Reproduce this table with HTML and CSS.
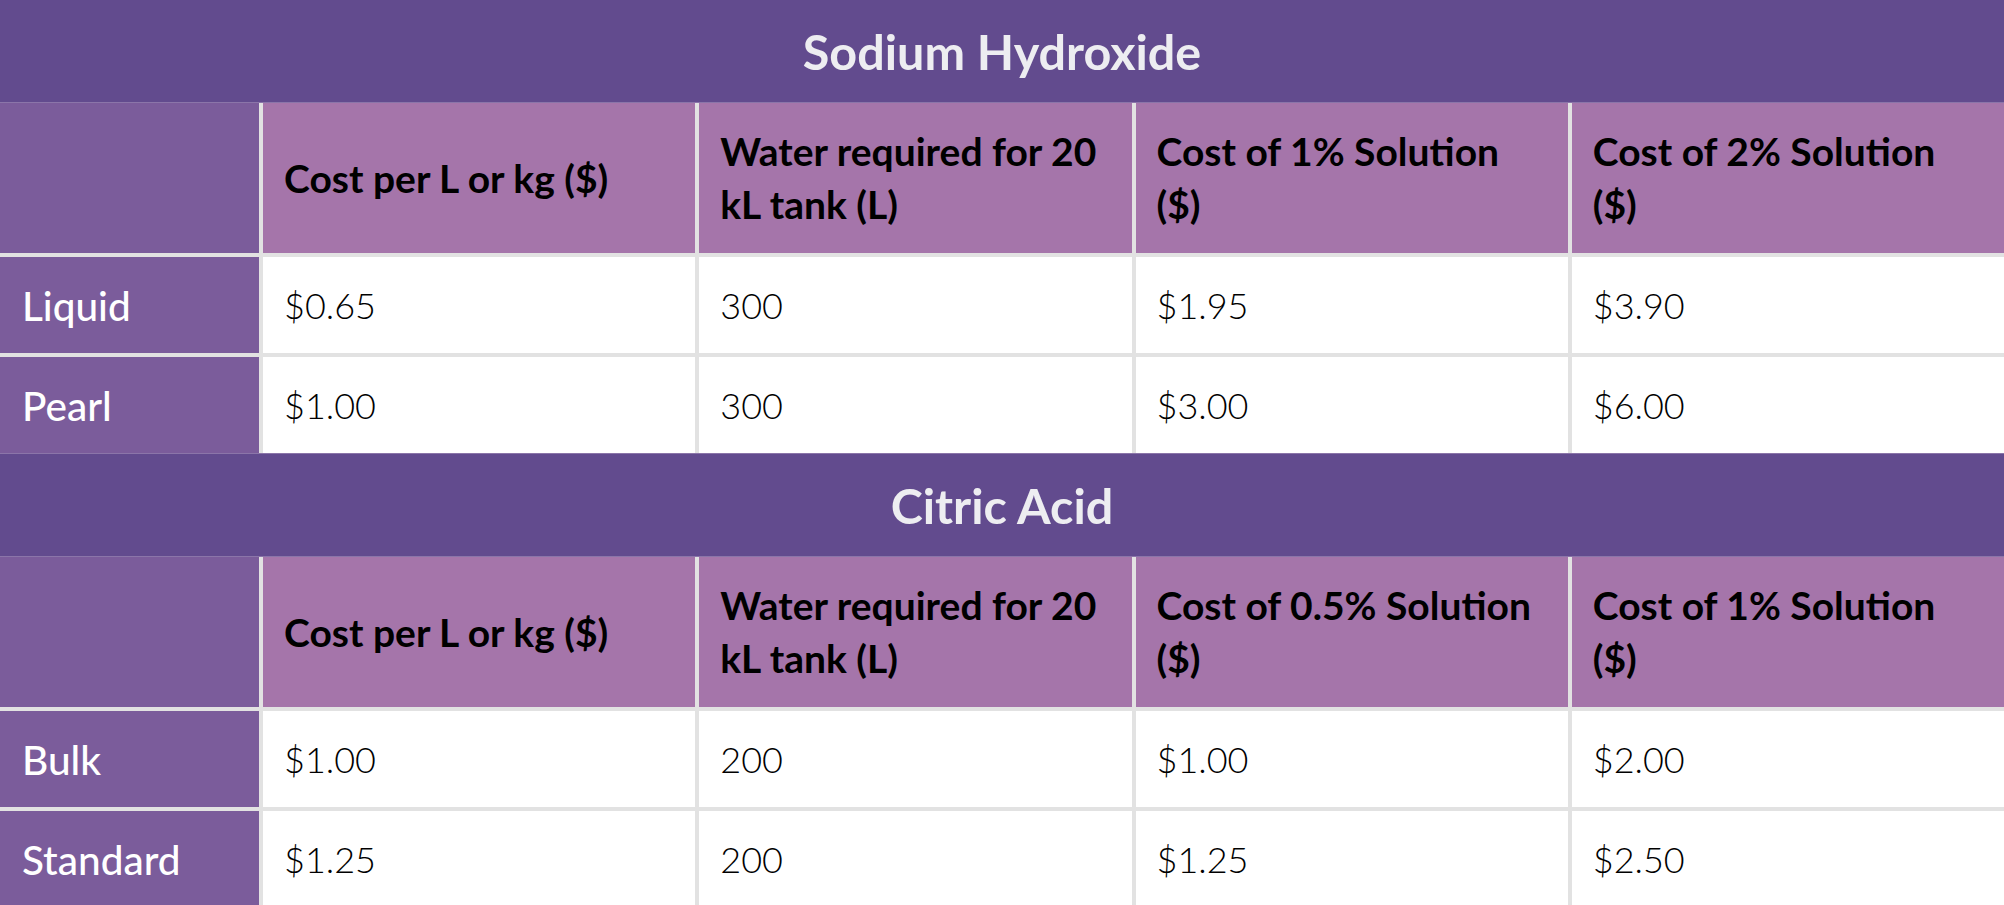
FILE: index.html
```html
<!DOCTYPE html>
<html lang="en">
<head>
<meta charset="utf-8">
<title>Cleaning Solution Costs</title>
<link rel="stylesheet" href="styles.css">
</head>
<body>
<div class="page">
  <section class="section">
    <div class="title">Sodium Hydroxide</div>
    <div class="grid">
      <div class="cell corner"></div>
      <div class="cell head">Cost per L or kg ($)</div>
      <div class="cell head">Water required for 20<br>kL tank (L)</div>
      <div class="cell head">Cost of 1% Solution<br>($)</div>
      <div class="cell head">Cost of 2% Solution<br>($)</div>

      <div class="cell label">Liquid</div>
      <div class="cell data">$0.65</div>
      <div class="cell data">300</div>
      <div class="cell data">$1.95</div>
      <div class="cell data">$3.90</div>

      <div class="cell label">Pearl</div>
      <div class="cell data">$1.00</div>
      <div class="cell data">300</div>
      <div class="cell data">$3.00</div>
      <div class="cell data">$6.00</div>
    </div>
  </section>
  <section class="section">
    <div class="title">Citric Acid</div>
    <div class="grid">
      <div class="cell corner"></div>
      <div class="cell head">Cost per L or kg ($)</div>
      <div class="cell head">Water required for 20<br>kL tank (L)</div>
      <div class="cell head">Cost of 0.5% Solution<br>($)</div>
      <div class="cell head">Cost of 1% Solution<br>($)</div>

      <div class="cell label">Bulk</div>
      <div class="cell data">$1.00</div>
      <div class="cell data">200</div>
      <div class="cell data">$1.00</div>
      <div class="cell data">$2.00</div>

      <div class="cell label">Standard</div>
      <div class="cell data">$1.25</div>
      <div class="cell data">200</div>
      <div class="cell data">$1.25</div>
      <div class="cell data">$2.50</div>
    </div>
  </section>
</div>
</body>
</html>
```
FILE: styles.css
```css
html, body {
  margin: 0;
  padding: 0;
  background: #ffffff;
}

body {
  font-family: Lato, "Open Sans", "Liberation Sans", sans-serif;
  overflow: hidden;
}

.page {
  width: 2004px;
}

.title {
  height: 102px;
  background: #624b8e;
  border-bottom: 1px solid #8b75a9;
  color: #ededf1;
  font-weight: 700;
  font-size: 48.5px;
  display: flex;
  align-items: center;
  justify-content: center;
}

.section + .section .title {
  border-top: 1px solid #8b75a9;
}

.grid {
  display: grid;
  grid-template-columns: 259px repeat(4, 1fr);
  grid-template-rows: 150px 96px 96px;
  gap: 4px;
  background: #e2e2e2;
}

.cell {
  display: flex;
  align-items: center;
  padding: 0 21px;
  font-size: 37px;
  line-height: 53px;
}

.corner,
.label {
  background: #7b5c9b;
}

.label {
  color: #ffffff;
  font-weight: 500;
  font-size: 40.5px;
  padding-left: 22px;
}

.head {
  background: #a575aa;
  color: #000000;
  font-weight: 700;
  font-size: 39px;
}

.data {
  background: #ffffff;
  color: #000000;
  font-weight: 300;
  font-size: 36px;
}
```
